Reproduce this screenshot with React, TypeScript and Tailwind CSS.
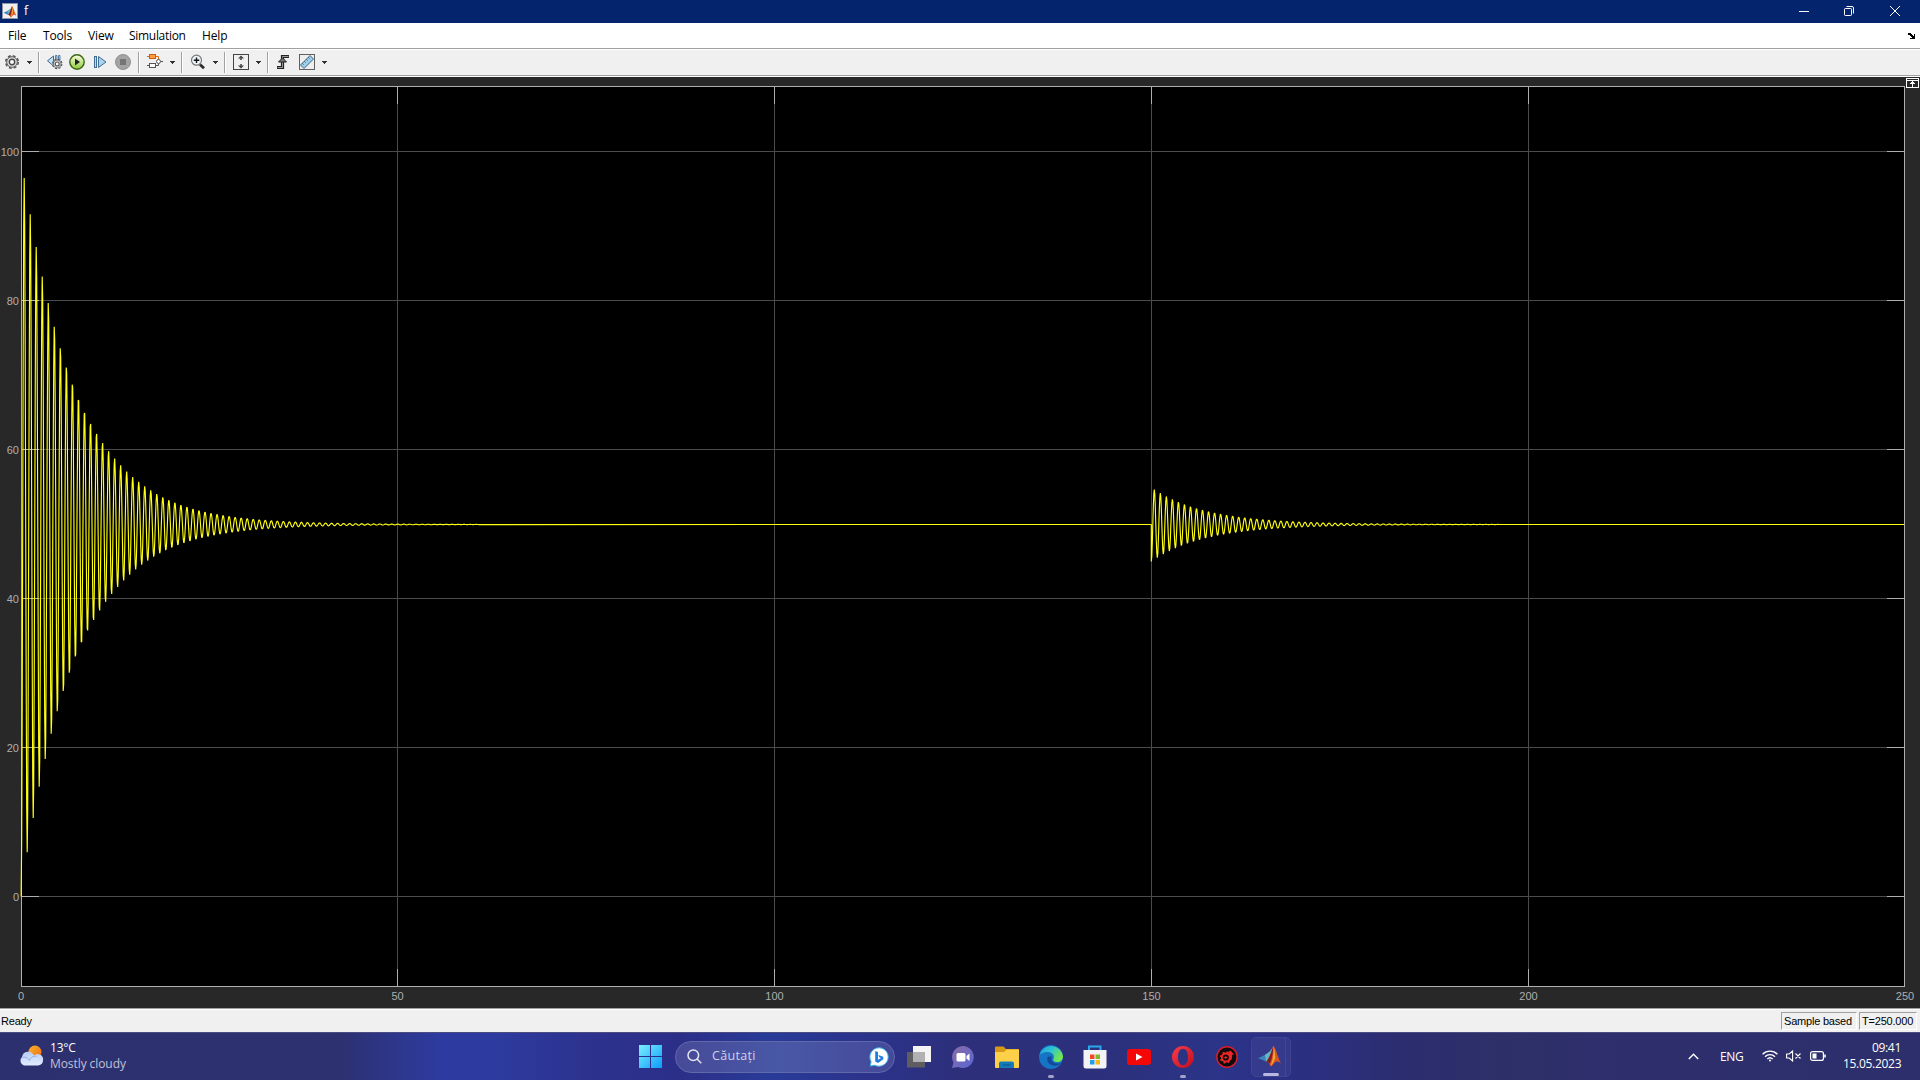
import React from 'react';

const X0 = 21.2;
const yOf = (v: number) => 819.5 - v * 7.45;
const PERIOD = 6.027;
const DECAY = 0.0183;
const BASE = 447.5;

function wave(start: number, end: number, amplitude: number): string[] {
  const pts: string[] = [];
  for (let x = start; x < end; x += 0.5) {
    const d = x - start;
    const y = BASE + amplitude * Math.exp(-DECAY * d) * Math.cos((2 * Math.PI * d) / PERIOD);
    pts.push(x.toFixed(2) + ',' + y.toFixed(2));
  }
  return pts;
}

const SECOND = 1151.3;
const TRACE = [`${X0},819.5`, ...wave(X0, 480, 366), `${SECOND},${BASE}`, ...wave(SECOND, 1500, 37), `1904,${BASE}`].join(' ');

const GRID_X = [397.5, 774.5, 1151.5, 1528.5];
const TICKS_X = [50, 100, 150, 200];
const GRID_Y = [100, 80, 60, 40, 20, 0];

function Plot() {
  return (
    <svg className="block w-full h-full" viewBox="0 0 1920 931" fontFamily='"Liberation Sans", Arial, sans-serif' fontSize="11" fill="#afafaf">
      <rect x="21.5" y="9.5" width="1883" height="900" fill="#000" />
      <g stroke="#4b4b4b" shapeRendering="crispEdges">
        {GRID_X.map((x) => <line key={x} x1={x} x2={x} y1="10" y2="909" />)}
        {GRID_Y.map((v) => { const y = Math.floor(yOf(v)) + 0.5; return <line key={v} x1="22" x2="1904" y1={y} y2={y} />; })}
      </g>
      <g stroke="#afafaf" shapeRendering="crispEdges">
        {GRID_X.map((x) => <path key={x} d={`M${x} 10v17M${x} 909v-17`} />)}
        {GRID_Y.map((v) => { const y = Math.floor(yOf(v)) + 0.5; return <path key={v} d={`M22 ${y}h17M1904 ${y}h-17`} />; })}
        <rect x="21.5" y="9.5" width="1883" height="900" fill="none" />
      </g>
      <polyline points={TRACE} fill="none" stroke="#ffff11" strokeWidth="1.15" strokeLinejoin="bevel" />
      {GRID_Y.map((v) => <text key={v} x="19" y={Math.floor(yOf(v)) + 5} textAnchor="end">{v}</text>)}
      <text x="21" y="923" textAnchor="middle">0</text>
      {TICKS_X.map((v, i) => <text key={v} x={GRID_X[i]} y="923" textAnchor="middle">{v}</text>)}
      <text x="1905" y="923" textAnchor="middle">250</text>
      <g shapeRendering="crispEdges">
        <rect x="1906" y="1" width="13" height="10" fill="#fff" />
        <rect x="1907" y="2" width="11" height="1" fill="#282828" />
        <rect x="1907" y="4" width="11" height="6" fill="#282828" />
        <path d="M1912 4h1v1h1v1h1v1h-2v3h-1v-3h-2v-1h1v-1h1z" fill="#fff" />
      </g>
    </svg>
  );
}

function Caret() {
  return <svg className="w-[5px] h-[3px] mt-px shrink-0" viewBox="0 0 5 3" shapeRendering="crispEdges"><path d="M0 0h5v1h-1v1h-1v1h-1v-1h-1v-1h-1z" fill="#333" /></svg>;
}

function Sep() {
  return <div className="w-[2px] h-[21px] mt-[2px] shrink-0 bg-[#a0a0a0] border-r border-white" />;
}

function Icon({ children }: { children: React.ReactNode }) {
  return <svg className="w-4 h-4 shrink-0" viewBox="0 0 16 16" fill="none">{children}</svg>;
}

function MatlabShape() {
  return (
    <>
      <path d="M0 9.2 4.8 7 8.2 4.6 9.6 7.5 5.8 11.6 4 10.8z" fill="#3a86b8" />
      <path d="m4.8 7 3.4-2.4L10.8.9 9 8.5 5.8 11.6z" fill="#69b4c9" />
      <path d="M10.8.6C9.5 3.5 8 9 5.8 11.6c1.5.1 2 1.2 3 3.4 1.6-.5 2.4-3 4-3.5 1.2-.3 2 .5 3.2 1.3C14 9.3 12.6 3 10.8.6z" fill="#d9541e" />
      <path d="M10.8.6C9.7 3.5 8 9 5.8 11.6c1-.1 1.7.6 2.2 1.5C10 10 10.4 5 10.8.6z" fill="#7c2022" />
      <path d="M10.8.6c.1 5-.1 9-2.1 14 1.5-1 2-3 3.3-5.2C12 6 11.5 3 10.8.6z" fill="#f2a13b" />
    </>
  );
}

function Gear({ x = 0, y = 0, s = 1 }: { x?: number; y?: number; s?: number }) {
  return (
    <g transform={`translate(${x} ${y}) scale(${s})`}>
      <circle cx="8" cy="8" r="6.3" stroke="#555" strokeWidth="1.5" strokeDasharray="2.9 2.048" />
      <circle cx="8" cy="8" r="5.3" fill="#dcdcdc" stroke="#5c5c5c" />
      <circle cx="8" cy="8" r="2.7" fill="#fafafa" stroke="#484848" strokeWidth="1.4" />
    </g>
  );
}

function Toolbar() {
  return (
    <div className="h-[25px] shrink-0 bg-[#f0f0f0] flex items-center pl-1 pb-[2px]">
      <Icon><Gear /></Icon>
      <div className="w-[7px]" /><Caret /><div className="w-[6px]" /><Sep />
      <div className="w-[7px]" />
      <Icon>
        <path d="M6.5 2v10L.5 6.8z" fill="#c5e3f5" stroke="#3d6a92" />
        <path d="M8.5 1.5h1.5v6H8.5zM11.5 1.5h1.5v5h-1.5z" fill="#b5d8ee" stroke="#3d6a92" strokeWidth=".8" />
        <Gear x={4.3} y={4} s={0.74} />
      </Icon>
      <div className="w-[6px]" />
      <Icon>
        <defs><linearGradient id="run" x1="0" y1="0" x2="0" y2="1"><stop stopColor="#f8ffe0" /><stop offset="1" stopColor="#8fc93a" /></linearGradient></defs>
        <circle cx="8" cy="8" r="7.2" fill="url(#run)" stroke="#3c6514" strokeWidth="1.4" />
        <path d="M6 4.5 11 8l-5 3.5z" fill="#222" />
      </Icon>
      <div className="w-[8px]" />
      <Icon>
        <rect x="1.500" y="2.500" width="2" height="11" fill="#b7d9ee" stroke="#3f6d93" />
        <path d="M5.500 2.500v11L13 8z" fill="#a9d3ee" stroke="#3f6d93" />
      </Icon>
      <div className="w-[6px]" />
      <Icon>
        <circle cx="8" cy="8" r="7.500" fill="#a3a3a3" stroke="#909090" />
        <rect x="5" y="5" width="6" height="6" fill="#757575" />
      </Icon>
      <div className="w-[7px]" /><Sep /><div className="w-[7px]" />
      <Icon>
        <path d="M0 2.500h9M9 2.500h2.500v3" stroke="#d56b1f" />
        <path d="M0 11.500h9M9 11.500h2.500v-2M14 7.500h2" stroke="#555" />
        <rect x="2.500" y=".5" width="6" height="4" fill="#ff9d45" stroke="#cc5c10" />
        <rect x="2.500" y="9.500" width="6" height="4" fill="#fff" stroke="#555" />
        <circle cx="11.500" cy="7.500" r="2" fill="#fff" stroke="#555" />
      </Icon>
      <div className="w-[7px]" /><Caret /><div className="w-[6px]" /><Sep /><div className="w-[7px]" />
      <Icon>
        <path d="m10 10.500 4 3.700" stroke="#2c2c2c" strokeWidth="2.800" />
        <circle cx="6.500" cy="6.200" r="5" fill="#edf6fc" stroke="#777" strokeWidth="1.200" />
        <path d="M6.500 3.500v5.500M3.800 6.200h5.500" stroke="#111" strokeWidth="1.400" />
      </Icon>
      <div className="w-[7px]" /><Caret /><div className="w-[6px]" /><Sep /><div className="w-[7px]" />
      <Icon>
        <rect x=".5" y=".5" width="15" height="15" fill="#f0f0f0" stroke="#444" />
        <path d="m8 1.500 3 3H5zM8 14.500l3-3H5z" fill="#444" />
        <path d="M8 4v2M8 10v2" stroke="#666" strokeWidth="2" />
      </Icon>
      <div className="w-[7px]" /><Caret /><div className="w-[6px]" /><Sep /><div className="w-[7px]" />
      <Icon>
        <path d="M1 13.500h5.500V2.500H13" stroke="#222" strokeWidth="3.200" />
        <path d="M1.500 13.500h5V2.500h6" stroke="#999" strokeWidth="1" />
        <path d="M6.500 3.800 10.500 8H2.500z" fill="#777" stroke="#222" />
      </Icon>
      <div className="w-[7px]" />
      <Icon>
        <rect x=".5" y=".5" width="15" height="15" fill="#efefef" stroke="#606060" />
        <path d="M11 1.500 14.500 5 5 14.500 1.500 11z" fill="#9fd0ea" stroke="#3d6480" />
        <path d="m9.500 3.500 1 1M7.500 5.500l1 1M5.500 7.500l1 1M3.500 9.500l1 1" stroke="#244a66" />
      </Icon>
      <div className="w-[7px]" /><Caret />
    </div>
  );
}

function Slot({ children, dot = false }: { children: React.ReactNode; dot?: boolean }) {
  return (
    <div className="relative w-11 h-[46px] flex items-center justify-center shrink-0">
      {children}
      {dot && <div className="absolute bottom-[2px] left-[19px] w-[6px] h-[3px] rounded-full bg-[#a3a2c8]" />}
    </div>
  );
}

function Taskbar() {
  return (
    <div className="h-12 shrink-0 border-t border-[#4b4d82] bg-[linear-gradient(90deg,#2d306f_0,#2d3170_340px,#2d3ba0_440px,#2d3ba0_490px,#2c318c_600px,#2c2f88_680px,#283b98_770px,#2b338c_860px,#2d2f7a_960px,#2c317d_1130px,#2b3488_1220px,#2b3085_1280px,#2c2d70_1400px,#2d3068_1500px,#2e2e6d_1640px,#2d2f6c_1920px)] flex items-start justify-between font-['Open_Sans',sans-serif] text-white">
      <div className="w-[628px] h-[46px] flex items-center pl-[18px]">
        <svg className="w-[26px] h-[22px]" viewBox="0 0 26 22">
          <defs><linearGradient id="cl" x1="0" y1="0" x2="0" y2="1"><stop stopColor="#b8cdf5" /><stop offset="1" stopColor="#e2ecfc" /></linearGradient><linearGradient id="sun" x1="0" y1="0" x2="1" y2="1"><stop stopColor="#f9b62c" /><stop offset="1" stopColor="#ef6a13" /></linearGradient></defs>
          <circle cx="17" cy="7" r="6.500" fill="url(#sun)" />
          <path d="M4 12a6.300 6.300 0 0 1 12-1.500A5.400 5.400 0 0 1 25 15.500a5 5 0 0 1-5 5H6a5 5 0 0 1-2-8.500z" fill="url(#cl)" />
          <path d="M4.500 12.500c3-1 6 .5 7 3 1-3 4-5 7-4" stroke="#8eabe6" fill="none" />
        </svg>
        <div className="ml-[6px] text-[12px] leading-4">
          <div className="tracking-[-.2px]">13°C</div>
          <div className="text-[#c0c1d8] tracking-[-.08px]">Mostly cloudy</div>
        </div>
      </div>
      <div className="flex items-center w-[672px] h-[47px]">
        <Slot>
          <svg className="w-[23px] h-[23px]" viewBox="0 0 23 23"><defs><linearGradient id="win" x1="0" y1="0" x2="1" y2="1"><stop stopColor="#7bf0ff" /><stop offset="1" stopColor="#0d9bfa" /></linearGradient></defs><path d="M0 0h11v11H0zM12 0h11v11H12zM0 12h11v11H0zM12 12h11v11H12z" fill="url(#win)" /></svg>
        </Slot>
        <div className="ml-[3px] mr-[2px] w-[220px] h-8 shrink-0 rounded-full border border-[#6069aa] bg-[linear-gradient(90deg,#474a98,#4858a6_48%,#45499a)] flex items-center pl-[11px] pr-[5px]">
          <svg className="w-[15px] h-[15px]" viewBox="0 0 15 15" fill="none" stroke="#e5e5f2" strokeWidth="1.500"><circle cx="6.300" cy="6.300" r="5.300" /><path d="m10 10 4.300 4.300" /></svg>
          <span className="ml-[10px] text-[12.500px] text-[#d0d1e7] flex-1 tracking-[.3px]">Căutați</span>
          <svg className="w-[20px] h-[20px]" viewBox="0 0 20 20"><path d="M10 .8a9.200 9.200 0 1 1-4.200 17.400L1.300 19l.8-4.400A9.200 9.200 0 0 1 10 .8z" fill="#fff" stroke="#35b5ef" strokeWidth="1" /><path d="m6.200 4 2.800 1v7.800l3-1.700-1.700-.8-1-2.400 5 1.800v2.600L9 16l-2.800-1.600z" fill="#1f7fe0" /></svg>
        </div>
        <Slot>
          <svg className="w-6 h-[22px]" viewBox="0 0 24 22"><rect y="6" width="18" height="15.500" fill="#5d5d62" /><rect x="6" width="18" height="16" fill="#f4f4f4" /><path d="M6 6h12v10H6z" fill="#b1b1b3" /></svg>
        </Slot>
        <Slot>
          <svg className="w-6 h-6" viewBox="0 0 24 24"><defs><linearGradient id="chat" x1="0" y1="0" x2="1" y2="1"><stop stopColor="#8a6da5" /><stop offset="1" stopColor="#5965d4" /></linearGradient></defs><path d="M12 1a11 11 0 1 1-5 20.900L1 23l1.500-5.600A11 11 0 0 1 12 1z" fill="url(#chat)" /><rect x="5.500" y="8" width="9" height="8.500" rx="1.500" fill="#fff" /><path d="m15.500 11 3-2.500v7.500l-3-2.500z" fill="#fff" /></svg>
        </Slot>
        <Slot>
          <svg className="w-6 h-[22px]" viewBox="0 0 24 22"><path d="M0 1.500A1 1 0 0 1 1 .5h7.500L11 3h12a1 1 0 0 1 1 1v5H0z" fill="#d79a16" /><path d="M0 6h9l2.500-2.500H24V21a1 1 0 0 1-1 1H1a1 1 0 0 1-1-1z" fill="#fdd04a" /><path d="M4 22v-4.500a2 2 0 0 1 2-2h11a2 2 0 0 1 2 2V22z" fill="#137bb8" /><path d="M8 19h7.500" stroke="#0b5487" /></svg>
        </Slot>
        <Slot dot>
          <svg className="w-6 h-6" viewBox="0 0 24 24"><defs><linearGradient id="ed" x1="0" y1="0" x2="1" y2=".5"><stop stopColor="#1fa0df" /><stop offset=".5" stopColor="#2fc3d1" /><stop offset="1" stopColor="#75e64e" /></linearGradient></defs><circle cx="12" cy="12" r="12" fill="#1674c4" /><path d="M.5 10A12 12 0 0 1 24 11.500c0 3.500-2.500 5.500-5.500 5.500-3.500 0-5-1.500-4-3.500C16 11 13.500 7 9 7 5 7 1.500 8.500.5 10z" fill="url(#ed)" /><path d="M8.500 12.500c-1.500 5.500 4 9.500 10.500 7.800 1.500-.5 3-1.200 3.300-2 .2-.6-6.800 2.200-9.300-2.300-1-2 0-4 0-4s-3-1.500-4.500.5z" fill="#15489a" /></svg>
        </Slot>
        <Slot>
          <svg className="w-6 h-6" viewBox="0 0 24 24"><path d="M6 6V1.500h11.500V6" fill="none" stroke="#28a8ec" strokeWidth="2" /><path d="M.5 5h23v16a2.500 2.500 0 0 1-2.500 2.500H3A2.500 2.500 0 0 1 .5 21z" fill="#f3f3f5" /><path d="M7 9.500h4.500V14H7z" fill="#ef4c24" /><path d="M12.500 9.500H17V14h-4.500z" fill="#7db82d" /><path d="M7 15h4.500v4.500H7z" fill="#219fe8" /><path d="M12.500 15H17v4.500h-4.500z" fill="#fbb615" /></svg>
        </Slot>
        <Slot>
          <svg className="w-6 h-4" viewBox="0 0 24 16"><rect width="24" height="16" rx="3" fill="#f60707" /><path d="m9 4.500 6.500 3.500L9 11.500z" fill="#fff" /></svg>
        </Slot>
        <Slot dot>
          <svg className="w-[22px] h-[22px]" viewBox="0 0 22 22"><defs><linearGradient id="op" x1="0" y1="0" x2="1" y2="1"><stop stopColor="#ff3d49" /><stop offset="1" stopColor="#b90d1d" /></linearGradient></defs><path fillRule="evenodd" d="M11 0a11 11 0 1 1 0 22 11 11 0 0 1 0-22zm0 2.800c-3 0-5 3.500-5 8.200s2 8.200 5 8.200 5-3.500 5-8.200-2-8.200-5-8.200z" fill="url(#op)" /></svg>
        </Slot>
        <Slot>
          <svg className="w-[22px] h-[22px]" viewBox="0 0 22 22" fill="none"><circle cx="11" cy="11" r="10.200" fill="#0d0b0c" stroke="#d51d2b" strokeWidth="1.500" /><circle cx="9.800" cy="11.500" r="4" stroke="#f32625" strokeWidth="1.800" /><circle cx="9.800" cy="11.500" r="5.300" stroke="#f32625" strokeWidth="1.400" strokeDasharray="2.200 1.963" /><path d="M11.500 6.500 14.500 4.500l3.500 4-1.800.3c0 4-1.500 6-4 7.500l1.500-7z" fill="#ef2426" /><path d="M9.800 10v3M8.300 11.500h3" stroke="#f32625" /></svg>
        </Slot>
        <div className="relative w-10 h-10 ml-[2px] rounded-[5px] border border-[#40448e] bg-[#353a8c] flex items-center justify-center">
          <div className="absolute right-[4px] top-0 bottom-0 w-px bg-[#43478e]" />
          <svg className="w-[23px] h-[23px] mr-[3px]" viewBox="0 0 16 16" fill="none"><MatlabShape /></svg>
          <div className="absolute bottom-0 left-[11px] w-4 h-[3px] rounded-full bg-[#b9b7e2]" />
        </div>
      </div>
      <div className="flex-1 h-[46px] flex items-center justify-end pr-[19px]">
        <svg className="w-[11px] h-[7px] mr-[21px]" viewBox="0 0 11 7" fill="none" stroke="#fff" strokeWidth="1.400"><path d="m.8 6 4.700-4.700L10.200 6" /></svg>
        <span className="w-[42px] text-[12px] leading-4 tracking-[-.4px] mt-px">ENG</span>
        <svg className="w-4 h-3 mr-2" viewBox="0 0 16 12" fill="none" stroke="#fff" strokeWidth="1.300"><path d="M.6 4.200a10.500 10.500 0 0 1 14.800 0M3 6.800a7 7 0 0 1 10 0M5.300 9a3.900 3.900 0 0 1 5.400 0" /><circle cx="8" cy="10.500" r="1" fill="#fff" stroke="none" /></svg>
        <svg className="w-4 h-3 mr-2" viewBox="0 0 16 12" fill="none" stroke="#fff" strokeWidth="1.100"><path d="M.6 4v4h2.600l3.400 3V1L3.200 4zM9.500 3.500l5 5M14.500 3.500l-5 5" /></svg>
        <svg className="w-4 h-[10px] mr-[17px]" viewBox="0 0 16 10" fill="none" stroke="#fff" strokeWidth="1.200"><rect x=".6" y=".6" width="12.800" height="8.800" rx="2" /><path d="M15 3.500v3" strokeWidth="1.600" /><rect x="2.500" y="2.500" width="4" height="5" fill="#fff" stroke="none" /></svg>
        <div className="text-[12px] leading-4 text-right tracking-[-.3px] w-[58px]">
          <div>09:41</div>
          <div>15.05.2023</div>
        </div>
      </div>
    </div>
  );
}

export default function App() {
  return (
    <div className="w-[1920px] h-[1080px] flex flex-col overflow-hidden bg-[#282828]">
      <div className="h-[23px] shrink-0 bg-[#04246d] text-white flex items-center pl-[2px] pb-px">
        <svg className="w-4 h-4" viewBox="0 0 16 16"><rect x=".5" y=".5" width="15" height="15" fill="#f0f0f2" stroke="#8b95a8" /><g transform="translate(1.500 2.500) scale(.8)"><MatlabShape /></g></svg>
        <span className="ml-[6px] text-[12px] font-['Open_Sans',sans-serif] flex-1">f</span>
        <svg className="w-[10px] h-[10px] mr-[35px]" viewBox="0 0 10 10"><path d="M0 5.500h10" stroke="#fff" /></svg>
        <svg className="w-[10px] h-[10px] mr-[36px]" viewBox="0 0 10 10" fill="none" stroke="#fff"><rect x=".5" y="2.500" width="7" height="7" rx=".8" /><path d="M2.500.5H8a1.500 1.500 0 0 1 1.500 1.500v5.500" /></svg>
        <svg className="w-[10px] h-[10px] mr-[20px]" viewBox="0 0 10 10" stroke="#fff"><path d="m0 0 10 10M10 0 0 10" /></svg>
      </div>
      <div className="h-[25px] shrink-0 bg-white flex items-center pl-2 pr-[5px] text-[12px] text-black font-['Open_Sans',sans-serif] tracking-[-.15px]">
        <span className="w-[35px]">File</span>
        <span className="w-[45px]">Tools</span>
        <span className="w-[41px]">View</span>
        <span className="w-[73px] tracking-[-.3px]">Simulation</span>
        <span className="flex-1">Help</span>
        <svg className="w-[7px] h-[6px]" viewBox="0 0 7 6" shapeRendering="crispEdges"><path d="M0 0h3v1h1v1h1v1h1V1h1v5H2V5h2V4H3V3H2V2H0z" /></svg>
      </div>
      <div className="h-[2px] shrink-0 bg-white border-t border-[#a0a0a0]" />
      <Toolbar />
      <div className="h-[2px] shrink-0 bg-white border-t border-[#a0a0a0]" />
      <div className="h-[931px] shrink-0"><Plot /></div>
      <div className="h-[2px] shrink-0 bg-white border-t border-[#a0a0a0]" />
      <div className="h-[22px] shrink-0 bg-[#f0f0f0] flex items-center justify-between text-[11px] text-black font-['Liberation_Sans',Arial,sans-serif] pl-[1px] pr-[3px]">
        <span className="tracking-[-.2px]">Ready</span>
        <div className="flex gap-[2px] h-[18px] leading-[17px]">
          <div className="w-[76px] pl-[2px] border border-[#a0a0a0] border-r-white border-b-white whitespace-nowrap tracking-[-.2px]">Sample based</div>
          <div className="w-[58px] pl-[2px] border border-[#a0a0a0] border-r-white border-b-white whitespace-nowrap tracking-[-.2px]">T=250.000</div>
        </div>
      </div>
      <Taskbar />
    </div>
  );
}
